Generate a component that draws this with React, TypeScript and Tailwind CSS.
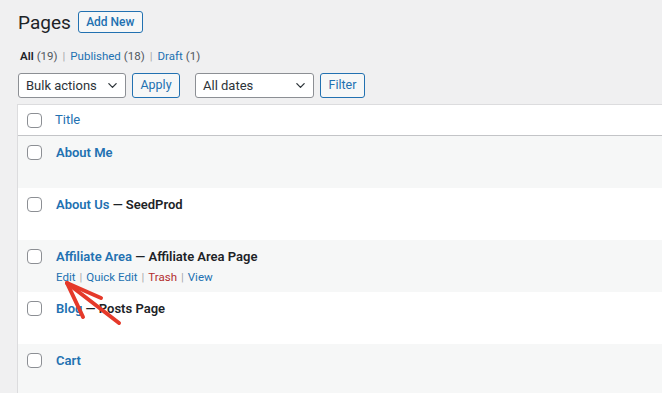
const ROWS = [
  { title: "About Me", state: "" },
  { title: "About Us", state: "SeedProd" },
  { title: "Affiliate Area", state: "Affiliate Area Page", actions: true },
  { title: "Blog", state: "Posts Page" },
  { title: "Cart", state: "" },
];

function Checkbox() {
  return <span className="block w-[15px] h-[15px] rounded-[4px] border border-[#8c8f94] bg-white shrink-0" />;
}

function Select({ label, width }: { label: string; width: string }) {
  return (
    <div
      className={`${width} h-[25px] flex items-center justify-between pl-[7px] pr-[7px] bg-white border border-[#8c8f94] rounded-[3px] text-[13px] whitespace-nowrap text-[#2c3338]`}
    >
      <span>{label}</span>
      <svg width="11" height="11" viewBox="0 0 12 12" fill="none">
        <path d="M2 4l4 4 4-4" stroke="#2c3338" strokeWidth="1.4" strokeLinecap="round" strokeLinejoin="round" />
      </svg>
    </div>
  );
}

function Button({ label, width }: { label: string; width: string }) {
  return (
    <div
      className={`${width} h-[25px] flex items-center justify-center bg-[#f6f7f7] border border-[#2271b1] rounded-[3px] text-[12.5px] text-[#2271b1]`}
    >
      {label}
    </div>
  );
}

export default function App() {
  return (
    <div className="relative w-[662px] h-[393px] overflow-hidden bg-[#f0f0f1] font-['Roboto',sans-serif] text-[#1d2327]">
      <div className="flex flex-col pl-[17px]">
        <div className="flex items-center h-[22px] mt-[11px] pl-[1px]">
          <h1 className="text-[19px] leading-none text-[#1d2327]">Pages</h1>
          <div className="ml-[7px] w-[65px] h-[22px] flex items-center justify-center border border-[#2271b1] rounded-[3px] bg-[#f6f7f7] text-[12px] font-medium text-[#2271b1]">
            Add New
          </div>
        </div>

        <div className="flex items-center h-[14px] mt-[17px] pl-[3px] text-[11.5px] text-[#50575e]">
          <span className="font-semibold text-[#1d2327]">All</span>
          <span className="ml-[3px]">(19)</span>
          <span className="mx-[5px] text-[#a7aaad]">|</span>
          <span className="text-[#2271b1]">Published</span>
          <span className="ml-[3px]">(18)</span>
          <span className="mx-[5px] text-[#a7aaad]">|</span>
          <span className="text-[#2271b1]">Draft</span>
          <span className="ml-[3px]">(1)</span>
        </div>

        <div className="flex items-center mt-[9px] pl-[1px]">
          <Select label="Bulk actions" width="w-[108px]" />
          <div className="ml-[6px]">
            <Button label="Apply" width="w-[48px]" />
          </div>
          <div className="ml-[15px]">
            <Select label="All dates" width="w-[119px]" />
          </div>
          <div className="ml-[6px]">
            <Button label="Filter" width="w-[45px]" />
          </div>
        </div>

        <div className="mt-[6px] w-[700px] border border-[#dcdcde] bg-white">
          <div className="flex items-center h-[31px] pl-[9px] border-b border-[#c3c4c7]">
            <Checkbox />
            <span className="ml-[13px] text-[13px] text-[#2271b1]">Title</span>
          </div>
          {ROWS.map((row, i) => (
            <div
              key={row.title}
              className={`h-[52px] flex items-start pl-[9px] pt-[9px] ${i % 2 === 0 ? "bg-[#f6f7f7]" : "bg-white"}`}
            >
              <Checkbox />
              <div className="ml-[14px] flex flex-col">
                <div className="text-[13px] leading-[15px] font-semibold">
                  <span className="text-[#2271b1]">{row.title}</span>
                  {row.state && <span className="text-[#1d2327]"> — {row.state}</span>}
                </div>
                {row.actions && (
                  <div className="mt-[6px] text-[11.5px] leading-[14px] text-[#2271b1]">
                    <span>Edit</span>
                    <span className="mx-[4px] text-[#a7aaad]">|</span>
                    <span>Quick Edit</span>
                    <span className="mx-[4px] text-[#a7aaad]">|</span>
                    <span className="text-[#b32d2e]">Trash</span>
                    <span className="mx-[4px] text-[#a7aaad]">|</span>
                    <span>View</span>
                  </div>
                )}
              </div>
            </div>
          ))}
        </div>
      </div>

      <svg className="absolute left-0 top-0 pointer-events-none" width="662" height="393" viewBox="0 0 662 393">
        <g stroke="#e5392a" strokeWidth="4" strokeLinecap="round" fill="none">
          <path d="M67 283 L119 323" />
          <path d="M67 283 L83 317" />
          <path d="M67 283 L101 298" />
        </g>
      </svg>
    </div>
  );
}
